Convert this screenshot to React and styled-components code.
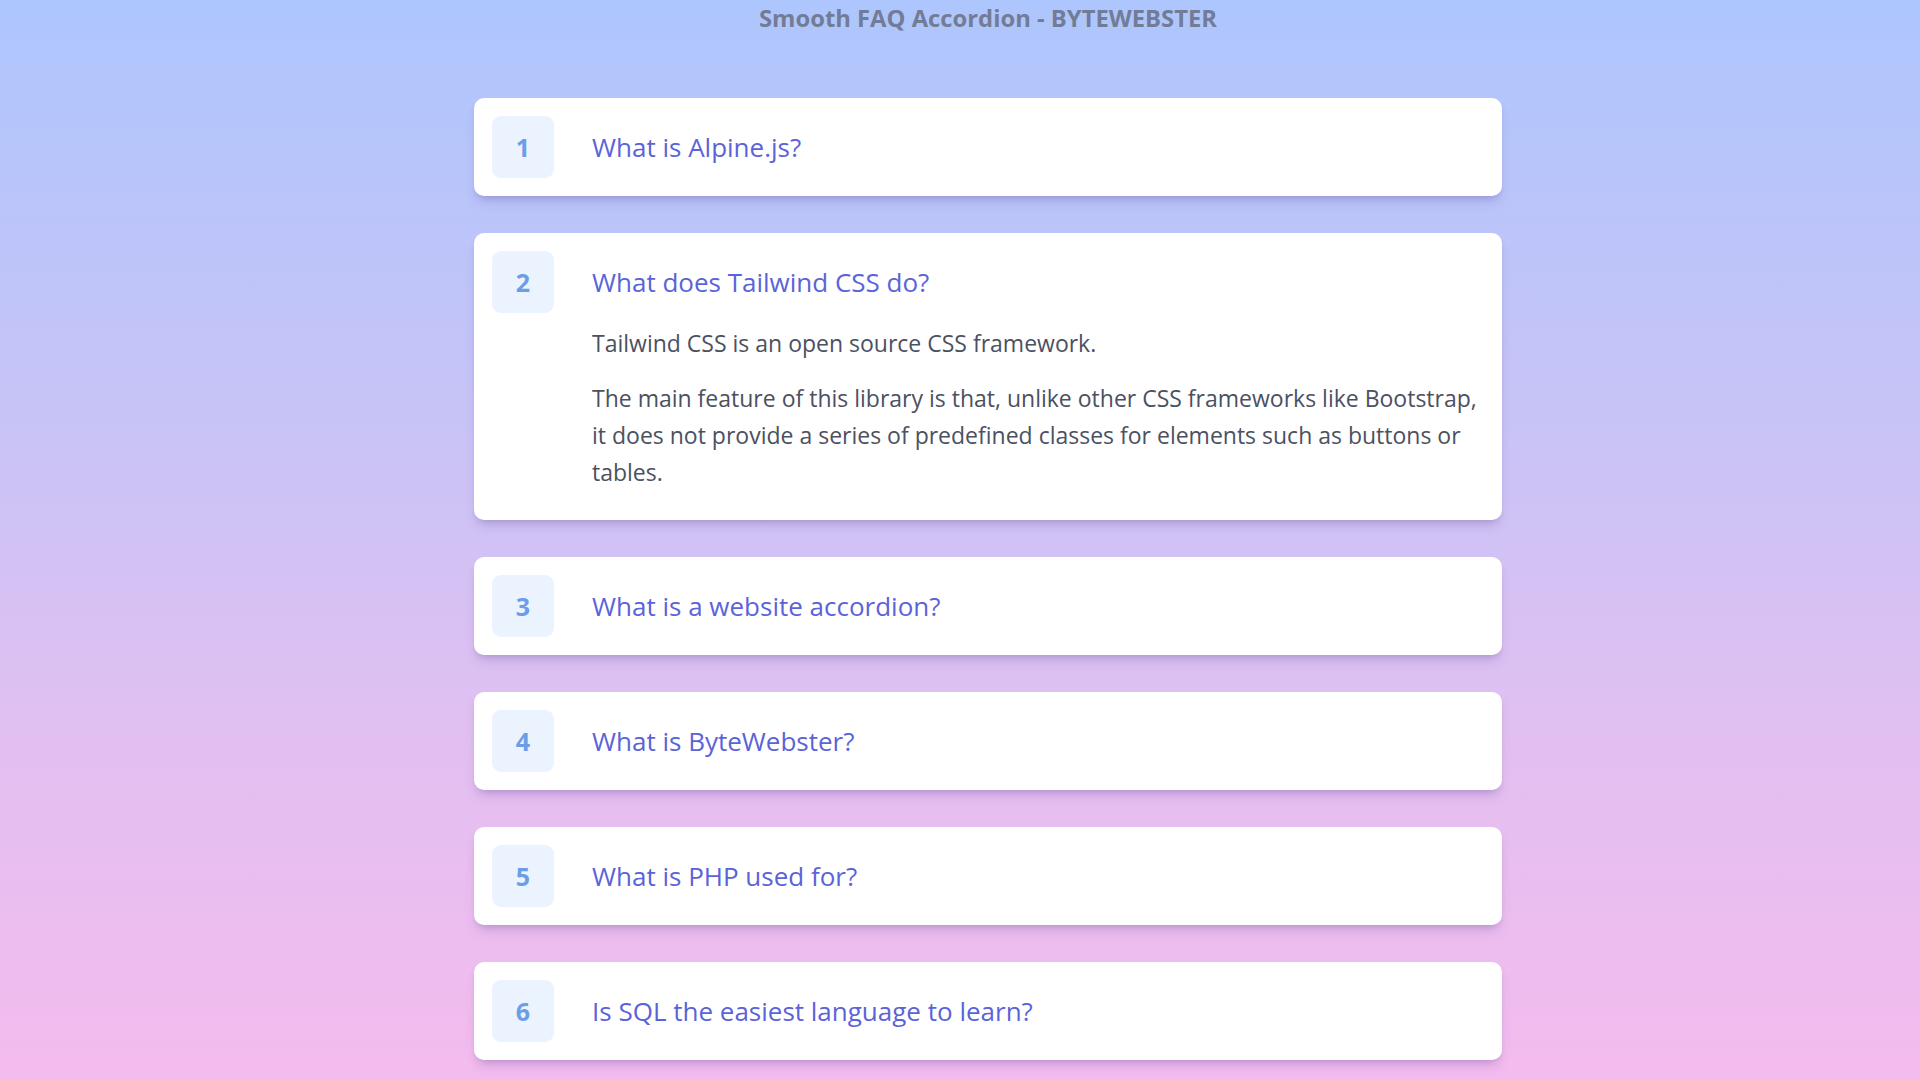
import React, { useState } from 'react'
import styled, { createGlobalStyle } from 'styled-components'

const GlobalStyle = createGlobalStyle`
  html, body {
    margin: 0;
    padding: 0;
  }
  body {
    min-height: 100vh;
    background: linear-gradient(180deg, #adc6fd 0%, #c9c3f6 40%, #e3bff1 70%, #f4bbee 100%);
    font-family: "Segoe UI", "Open Sans", "Noto Sans", sans-serif;
  }
  * {
    box-sizing: border-box;
  }
`

const faqs = [
  { q: 'What is Alpine.js?', a: [] },
  {
    q: 'What does Tailwind CSS do?',
    a: [
      'Tailwind CSS is an open source CSS framework.',
      'The main feature of this library is that, unlike other CSS frameworks like Bootstrap, it does not provide a series of predefined classes for elements such as buttons or tables.',
    ],
  },
  { q: 'What is a website accordion?', a: [] },
  { q: 'What is ByteWebster?', a: [] },
  { q: 'What is PHP used for?', a: [] },
  { q: 'Is SQL the easiest language to learn?', a: [] },
]

export default function App() {
  const [open, setOpen] = useState(1)

  return (
    <Page>
      <GlobalStyle />
      <Wrapper>
        <Title>Smooth FAQ Accordion - BYTEWEBSTER</Title>
        <List>
          {faqs.map((item, i) => (
            <Card key={item.q}>
              <Header onClick={() => setOpen(open === i ? -1 : i)}>
                <Number>{i + 1}</Number>
                <Question>{item.q}</Question>
              </Header>
              {open === i && item.a.length > 0 && (
                <Answer>
                  {item.a.map(text => (
                    <Paragraph key={text}>{text}</Paragraph>
                  ))}
                </Answer>
              )}
            </Card>
          ))}
        </List>
      </Wrapper>
    </Page>
  )
}

const Page = styled.div`
  padding-left: 56px;
`

const Wrapper = styled.main`
  max-width: 1028px;
  margin: 0 auto;
`

const Title = styled.h1`
  margin: 0 0 64px;
  padding-top: 3px;
  text-align: center;
  font-size: 23.8px;
  line-height: 31px;
  font-weight: 700;
  color: #737c96;
`

const List = styled.div`
  display: flex;
  flex-direction: column;
  gap: 37px;
`

const Card = styled.section`
  background: #ffffff;
  border-radius: 10px;
  padding: 18px;
  box-shadow: 0 8px 12px -4px rgba(90, 70, 150, 0.28), 0 3px 6px -3px rgba(90, 70, 150, 0.18);
`

const Header = styled.div`
  display: flex;
  align-items: center;
  gap: 38px;
  cursor: pointer;
`

const Number = styled.div`
  flex: none;
  width: 62px;
  height: 62px;
  border-radius: 9px;
  background: #ebf3fe;
  display: flex;
  align-items: center;
  justify-content: center;
  font-size: 25px;
  font-weight: 700;
  color: #6c9de8;
`

const Question = styled.h2`
  margin: 0;
  font-size: 26px;
  font-weight: 400;
  color: #5b63d9;
`

const Answer = styled.div`
  padding: 12px 0 11px 100px;
  display: flex;
  flex-direction: column;
  gap: 18px;
`

const Paragraph = styled.p`
  margin: 0;
  font-size: 23px;
  line-height: 37px;
  color: #4b5161;
`
